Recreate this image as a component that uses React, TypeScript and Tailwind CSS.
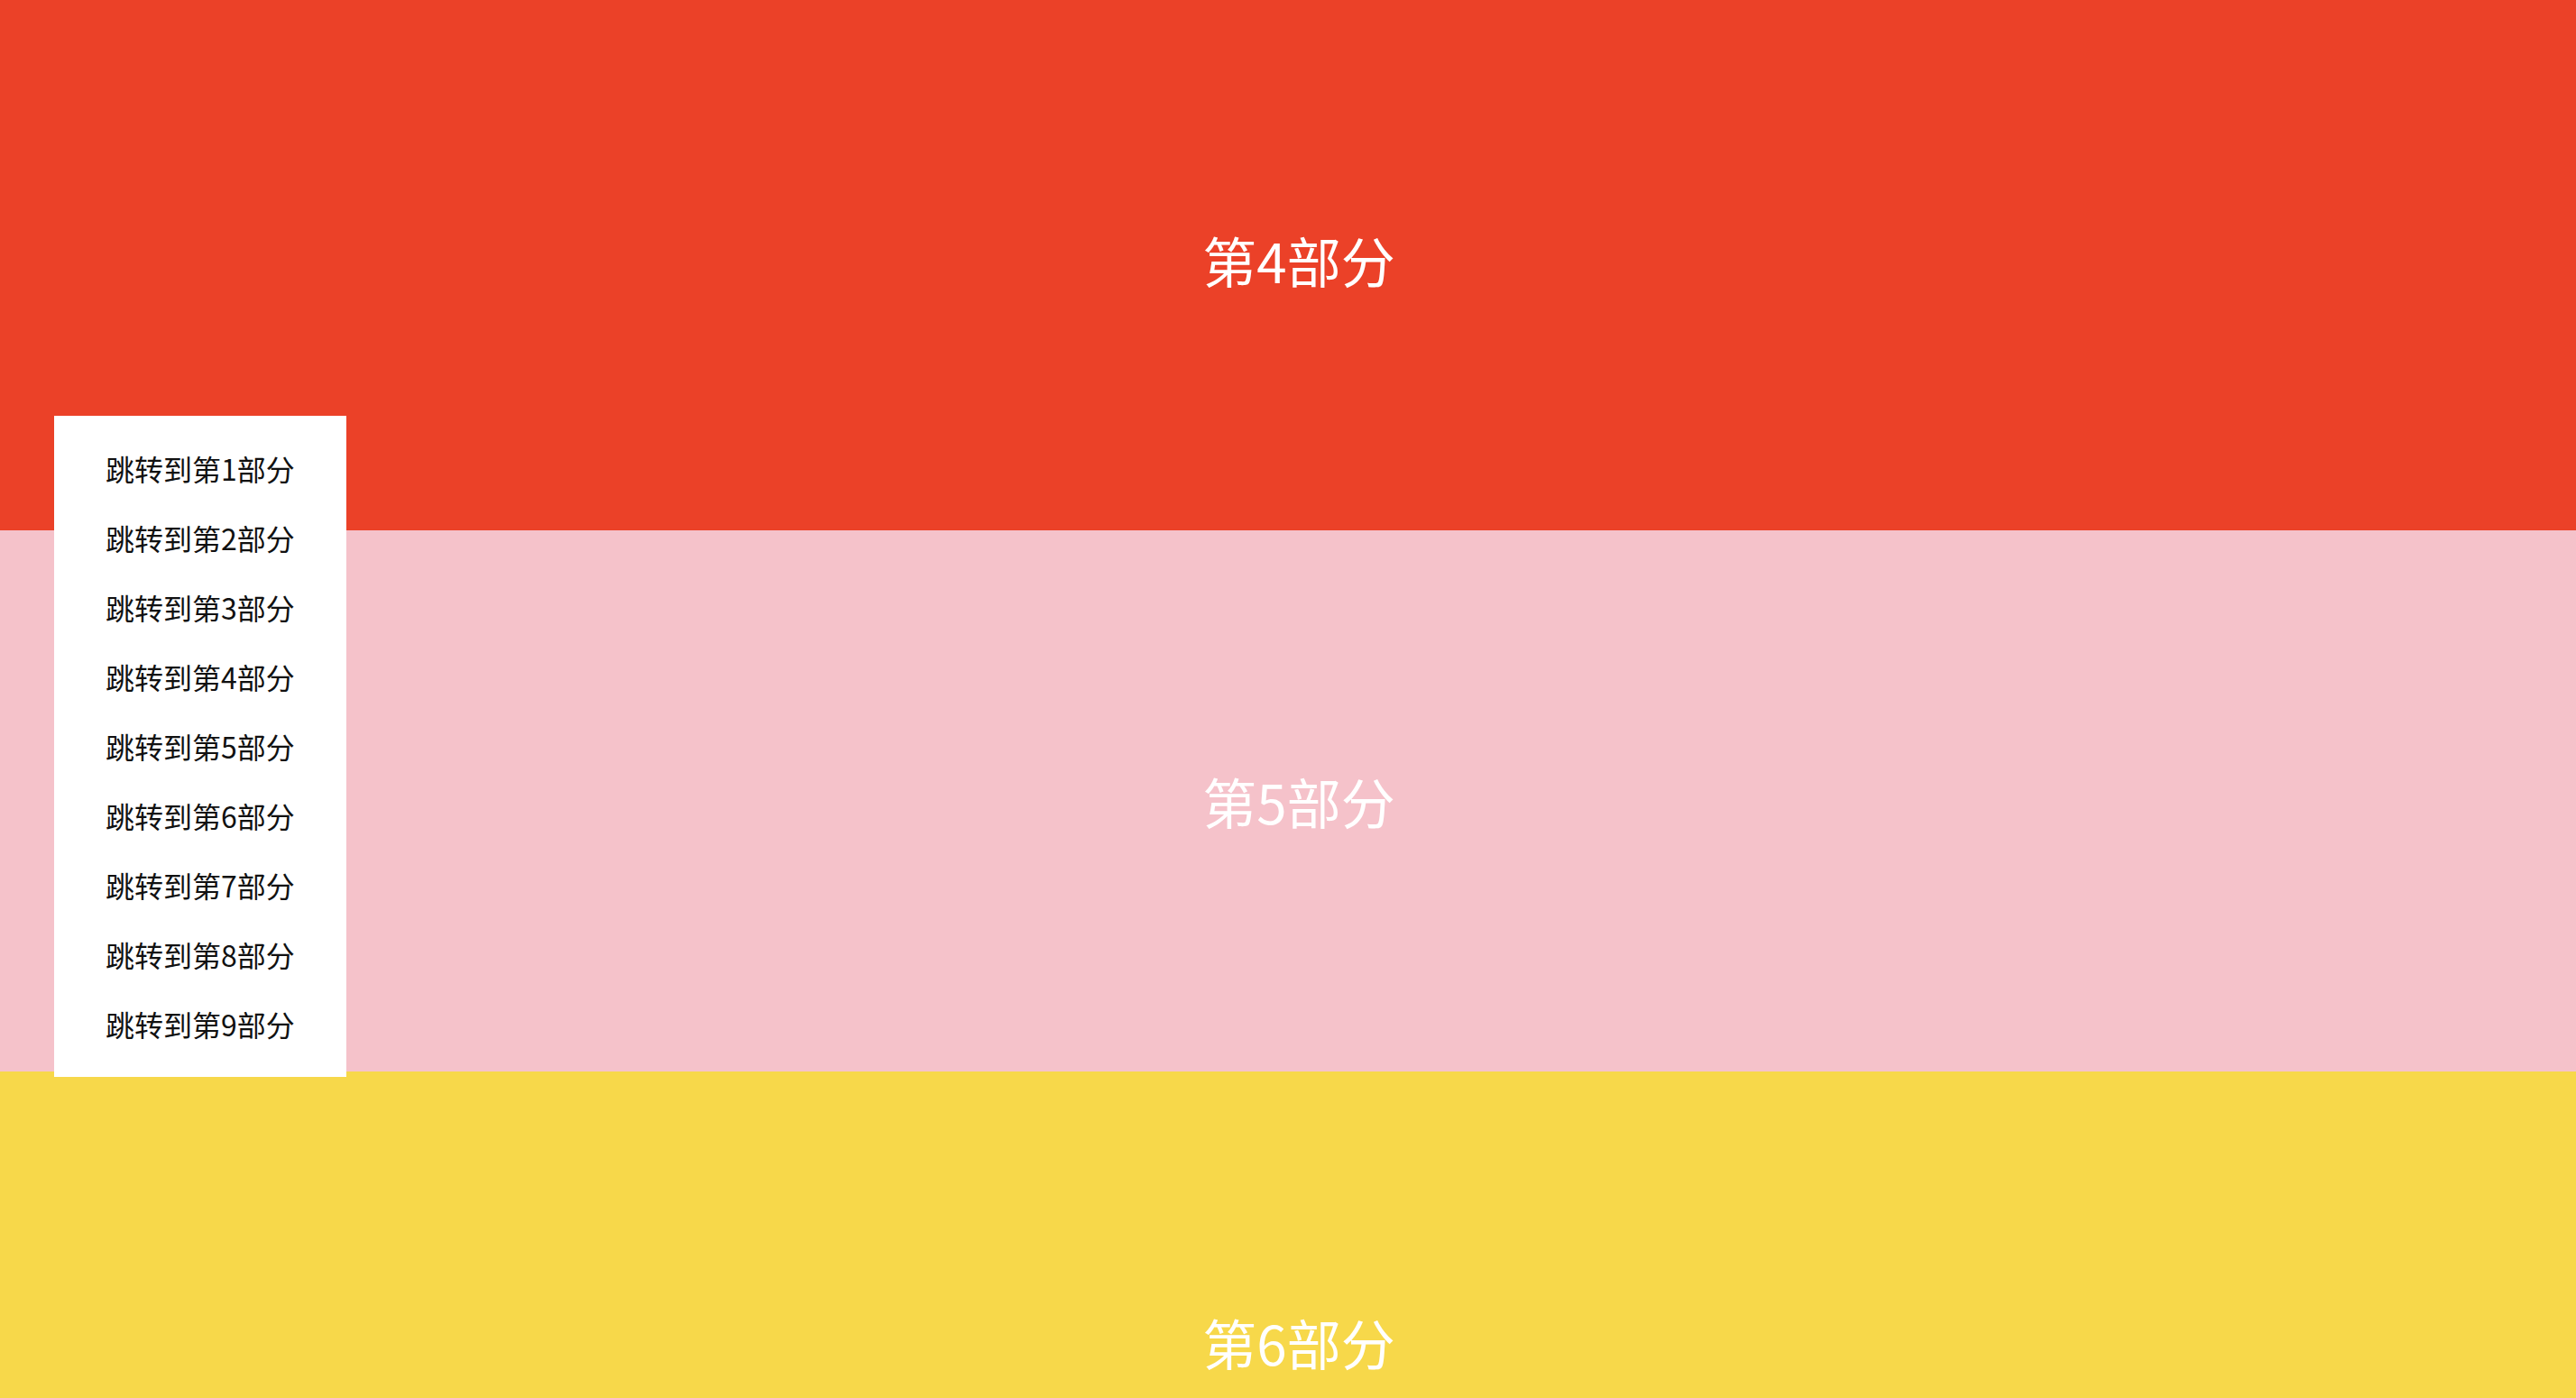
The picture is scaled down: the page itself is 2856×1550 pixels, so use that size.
import { useLayoutEffect } from "react";

const sections = [
  { id: 1, bg: "bg-[#4a90e2]" },
  { id: 2, bg: "bg-[#50c3a4]" },
  { id: 3, bg: "bg-[#8e6ad8]" },
  { id: 4, bg: "bg-[#eb4128]" },
  { id: 5, bg: "bg-[#f5c2ca]" },
  { id: 6, bg: "bg-[#f7d84a]" },
  { id: 7, bg: "bg-[#3bb273]" },
  { id: 8, bg: "bg-[#2f4858]" },
  { id: 9, bg: "bg-[#f08a4b]" },
];

export default function App() {
  // the shot shows the page scrolled down to part 4
  useLayoutEffect(() => {
    window.scrollTo(0, 1812);
  }, []);

  const jump = (id: number) => {
    document.getElementById(`part-${id}`)?.scrollIntoView({ behavior: "smooth" });
  };

  return (
    <main className="min-h-screen font-['Noto_Sans_CJK_SC','Noto_Sans',sans-serif]">
      {sections.map((s) => (
        <section
          key={s.id}
          id={`part-${s.id}`}
          className={`flex h-[600px] w-full items-center justify-center pl-6 text-[60px] text-white ${s.bg}`}
        >
          第{s.id}部分
        </section>
      ))}

      {/* jump menu */}
      <nav className="fixed left-[60px] top-[461px] w-[324px] bg-white py-[20px]">
        <ul>
          {sections.map((s) => (
            <li key={s.id}>
              <button
                onClick={() => jump(s.id)}
                className="block h-[77px] w-full pl-[57px] text-left text-[32px] leading-[77px] text-[#111]"
              >
                跳转到第{s.id}部分
              </button>
            </li>
          ))}
        </ul>
      </nav>
    </main>
  );
}
